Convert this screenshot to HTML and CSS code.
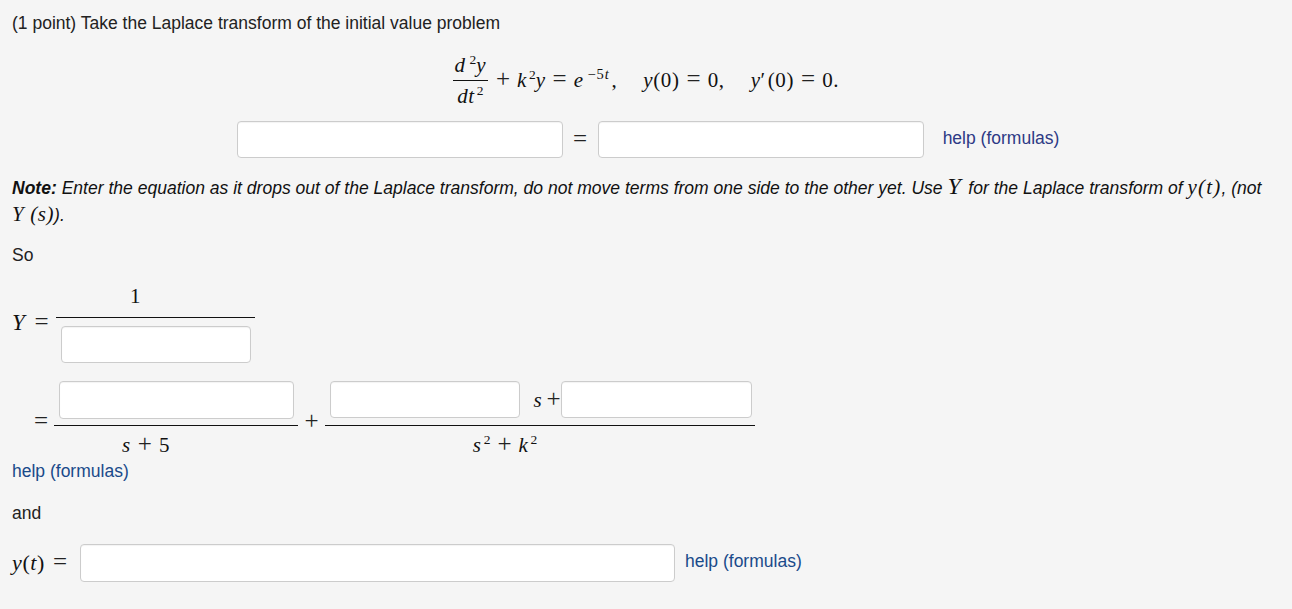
FILE: index.html
```html
<!DOCTYPE html>
<html lang="en">
<head>
<meta charset="utf-8">
<title>Laplace transform problem</title>
<link rel="stylesheet" href="styles.css">
</head>
<body>
<main class="problem">
  <p class="title">(1 point) Take the Laplace transform of the initial value problem</p>

  <div class="display-eq math">
    <span class="frac frac-d">
      <span class="num"><i>d</i><sup class="sup-d">2</sup><i>y</i></span>
      <span class="den"><i>dt</i><sup>2</sup></span>
    </span>
    <span class="eq-rest"><span class="op op-first">+</span><i>k</i><sup>2</sup><i>y</i><span class="op">=</span><i>e</i><sup class="sup-exp">−5<i>t</i></sup>,<span class="quad"></span><i>y</i>(0)<span class="op">=</span>0,<span class="quad"></span><i>y</i>′<span class="pr"></span>(0)<span class="op">=</span>0.</span>
  </div>

  <div class="answer-row">
    <span class="field field-a"></span>
    <span class="math eq-sign"><span class="op-glyph">=</span></span>
    <span class="field field-a"></span>
    <a class="help help-first" href="#">help (formulas)</a>
  </div>

  <p class="note"><b>Note:</b> Enter the equation as it drops out of the Laplace transform, do not move terms from one side to the other yet. Use <span class="math big big-y">Y</span> for the Laplace transform of <span class="math big big-yt">y(t)</span>, (not<br><span class="math big">Y (<i>s</i>)</span>).</p>

  <p class="so">So</p>

  <div class="frac-row row-y">
    <span class="math lhs lhs-y"><i>Y</i><span class="op">=</span></span>
    <span class="frac frac-y">
      <span class="num num-y math">1</span>
      <span class="den den-y"><span class="field field-b"></span></span>
    </span>
  </div>

  <div class="frac-row row-sum">
    <span class="math lhs lhs-eq"><span class="op-glyph">=</span></span>
    <span class="frac frac-s5">
      <span class="num num-box"><span class="field field-c"></span></span>
      <span class="den den-math den-s5 math"><i>s</i><span class="op">+</span>5</span>
    </span>
    <span class="math lhs plus"><span class="op-glyph">+</span></span>
    <span class="frac frac-k">
      <span class="num num-box num-k">
        <span class="field field-b"></span>
        <span class="math splus"><i>s</i><span class="op-glyph splus-glyph">+</span></span>
        <span class="field field-e"></span>
      </span>
      <span class="den den-math den-k math"><i>s</i><sup>2</sup><span class="op">+</span><i>k</i><sup>2</sup></span>
    </span>
  </div>

  <a class="help help-block" href="#">help (formulas)</a>

  <p class="and">and</p>

  <div class="last-row">
    <span class="math yt"><i>y</i>(<i>t</i>)<span class="op">=</span></span>
    <span class="field field-d"></span>
    <a class="help" href="#">help (formulas)</a>
  </div>
</main>
</body>
</html>
```
FILE: styles.css
```css
* { box-sizing: border-box; }
html, body { margin: 0; height: 100%; }
body {
  background: #f5f5f5;
  color: #222;
  font-family: "Liberation Sans", Arial, sans-serif;
  font-size: 17.5px;
  line-height: 26px;
}
.problem { padding: 10px 12px 0; }
p { margin: 0; }
.math { font-family: "Liberation Serif", "Times New Roman", serif; color: #111; font-size: 21px; letter-spacing: .6px; }
.math sup { font-size: 13.5px; line-height: 0; vertical-align: baseline; position: relative; top: -8px; margin-left: 2px; letter-spacing: 0; }
.math .sup-d { margin-left: 4px; }
.math .sup-exp { font-size: 14.5px; margin-left: 4px; letter-spacing: .8px; margin-right: 2px; }
.op, .op-glyph { font-size: 25px; line-height: 0; font-weight: 300; color: #222; letter-spacing: 0; }
.op { margin: 0 7px; }
.op-first { margin-left: 0; }
.title { height: 26px; }
.display-eq {
  display: flex;
  justify-content: center;
  align-items: center;
  height: 60px;
  margin-top: 14px;
}
.frac { display: inline-flex; flex-direction: column; align-items: center; }
.frac-d { width: 35px; margin-right: 8px; }
.frac-d .num { border-bottom: 1px solid #111; width: 100%; text-align: center; height: 31px; line-height: 30px; white-space: nowrap; }
.frac-d .den { height: 29px; line-height: 30px; white-space: nowrap; }
.quad { display: inline-block; width: 26px; }
.pr { display: inline-block; width: 2px; }
.answer-row {
  display: flex;
  justify-content: center;
  align-items: center;
  height: 37px;
  margin-top: 11px;
  margin-left: 4px;
}
.field {
  display: block;
  flex: none;
  background: #fff;
  border: 1px solid #ccc;
  border-radius: 4px;
  box-shadow: inset 0 1px 1px rgba(0, 0, 0, .05);
}
.field-a { width: 326px; height: 37px; }
.field-b { width: 190px; height: 37px; }
.field-c { width: 235px; height: 38px; }
.field-d { width: 595px; height: 38px; }
.field-e { width: 191px; height: 37px; }
.eq-sign { width: 35px; text-align: center; }
.help { color: #1a4a8a; text-decoration: none; }
.answer-row .help, .last-row .help { padding-bottom: 4px; }
.help-first { margin-left: 19px; color: #2d3a85; }
.note { margin-top: 16px; font-style: italic; color: #111; font-size: 17.54px; white-space: nowrap; }
.note .math { font-style: normal; }
.note .big { font-size: 21px; font-style: italic; }
.note .big-y { font-size: 24px; line-height: 0; margin-right: 2px; }
.note .big-yt { letter-spacing: 1.2px; }
.so { margin-top: 14px; }
.frac-row { display: flex; align-items: flex-start; }
.row-y { margin-top: 18px; }
.lhs { flex: none; }
.lhs-y { width: 44px; padding-top: 24px; font-size: 23px; white-space: nowrap; }
.lhs-y .op { margin: 0 0 0 9px; }
.frac-y { width: 199px; }
.num-y { height: 32px; line-height: 21px; border-bottom: 1px solid #111; width: 100%; text-align: center; padding-right: 40px; }
.den-y { padding-top: 8px; }
.row-sum { margin-top: 18px; }
.lhs-eq { width: 42px; padding: 28px 0 0 22px; }
.frac-s5 { width: 244px; }
.num-box {
  display: flex;
  align-items: center;
  justify-content: center;
  width: 100%;
  height: 45px;
  padding-bottom: 7px;
  border-bottom: 1px solid #111;
}
.num-k { padding-left: 1px; }
.den-math { height: 26px; padding-top: 6px; line-height: 26px; white-space: nowrap; }
.den-s5 { padding-right: 60px; }
.den-k { padding-right: 70px; }
.plus { width: 27px; padding-top: 28px; text-align: center; }
.frac-k { width: 430px; }
.splus { width: 41px; text-align: right; white-space: nowrap; }
.splus-glyph { margin-left: 4px; }
.help-block { display: block; margin-top: 6px; }
.and { margin-top: 16px; }
.last-row { display: flex; align-items: center; margin-top: 18px; height: 38px; }
.yt { width: 68px; white-space: nowrap; font-size: 22px; }
.yt .op { margin: 0 0 0 8px; }
.last-row .help { margin-left: 10px; }
```
